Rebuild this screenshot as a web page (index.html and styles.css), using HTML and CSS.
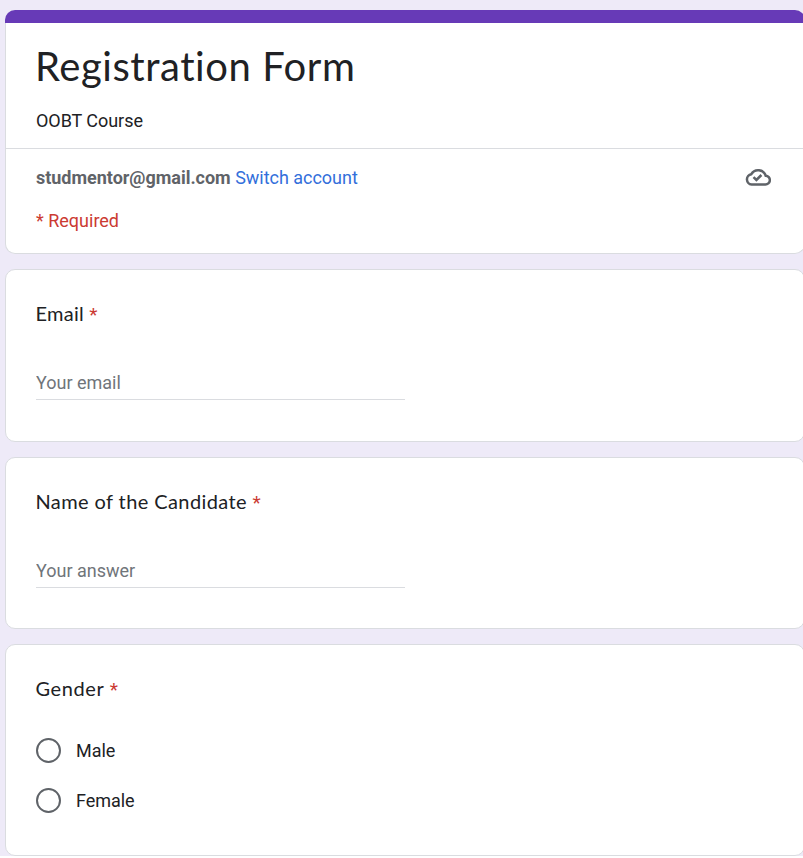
FILE: index.html
```html
<!DOCTYPE html>
<html lang="en">
<head>
    <meta charset="UTF-8">
    <meta name="viewport" content="width=device-width, initial-scale=1.0">
    <title>Registration Form</title>
    <link rel="stylesheet" href="styles.css">
</head>
<body>
    <form class="form">
        <div class="card header">
            <div class="intro">
                <h1>Registration Form</h1>
                <p class="description">OOBT Course</p>
            </div>
            <div class="account">
                <div class="account-text"><b>studmentor@gmail.com</b> <a href="#">Switch account</a></div>
                <svg class="cloud" viewBox="0 0 26 18" fill="none" stroke="#5f6368" stroke-width="2.5">
                    <path d="M6.6 16.5h13.6a4.4 4.4 0 0 0 .5-8.8A7.9 7.9 0 0 0 6.3 6.2a5.2 5.2 0 0 0 .3 10.3z"/>
                    <path d="M8.5 9.2l2.9 2.8 5-5"/>
                </svg>
            </div>
            <div class="required">* Required</div>
        </div>

        <div class="card question">
            <label class="label label-email" for="email">Email <span class="star">*</span></label>
            <input type="text" id="email" name="email" placeholder="Your email">
        </div>

        <div class="card question">
            <label class="label label-name" for="name">Name of the Candidate <span class="star">*</span></label>
            <input type="text" id="name" name="name" placeholder="Your answer">
        </div>

        <div class="card question gender">
            <div class="label label-gender">Gender <span class="star">*</span></div>
            <label class="option"><input type="radio" name="gender" value="male">Male</label>
            <label class="option"><input type="radio" name="gender" value="female">Female</label>
        </div>
    </form>
</body>
</html>
```
FILE: styles.css
```css
* {
    box-sizing: border-box;
}

body {
    font-family: Roboto, Arial, sans-serif;
    font-size: 18px;
    color: #202124;
    background-color: #fff;
    margin: 0;
    overflow: hidden;
}

.form {
    display: flex;
    flex-direction: column;
    gap: 15px;
    height: 856px;
    padding: 10px 0 0 5px;
    background-color: #eeeaf8;
}

.card {
    flex: none;
    width: 800px;
    background-color: #fff;
    border: 1px solid #dadce0;
    border-radius: 10px;
}

.header {
    height: 244px;
    border-top: none;
}

/* colour bar over the top edge of the card */
.header::before {
    content: "";
    display: block;
    height: 13px;
    margin: 0 -1px;
    background-color: #673ab7;
    border-radius: 10px 10px 0 0;
}

.intro {
    height: 126px;
    padding: 18px 30px 0;
    border-bottom: 1px solid #dadce0;
}

h1 {
    font-family: Lato, sans-serif;
    font-size: 40px;
    font-weight: 400;
    line-height: 50px;
    letter-spacing: 0.55px;
    text-indent: -1px;
    margin: 0;
}

.description {
    margin: 18px 0 0;
    line-height: 24px;
    letter-spacing: -0.05px;
}

.account {
    display: flex;
    align-items: center;
    justify-content: space-between;
    height: 24px;
    margin: 16px 33px 0 30px;
    color: #5f6368;
    letter-spacing: -0.02px;
}

.account a {
    color: #336fdb;
    text-decoration: none;
}

.cloud {
    width: 26px;
    height: 18px;
}

.required {
    margin: 20px 30px 0;
    line-height: 24px;
    color: #cb3a32;
}

.question {
    height: 173px;
    padding: 28px 30px;
}

.question + .question {
    height: 172px;
}

.label {
    display: block;
    font-family: Lato, sans-serif;
    font-size: 20px;
    line-height: 30px;
    letter-spacing: 0.4px;
    text-indent: -0.5px;
}

.label-email {
    letter-spacing: 0.25px;
}

.label-gender {
    letter-spacing: 0.6px;
}

.star {
    font-family: Roboto, Arial, sans-serif;
    font-size: 19px;
    color: #cb3a32;
}

input[type="text"] {
    display: block;
    width: 369px;
    height: 34px;
    margin-top: 36px;
    padding: 0;
    border: none;
    border-bottom: 1px solid #dadce0;
    font: inherit;
    outline: none;
}

input::placeholder {
    color: #70757a;
    opacity: 1;
}

.question.gender {
    height: 212px;
}

.option {
    display: flex;
    align-items: center;
    gap: 15px;
    height: 25px;
    margin-top: 25px;
    letter-spacing: -0.05px;
}

.label-gender + .option {
    margin-top: 33px;
}

input[type="radio"] {
    appearance: none;
    width: 25px;
    height: 25px;
    margin: 0;
    border: 2px solid #5f6368;
    border-radius: 50%;
}

input[type="radio"]:checked {
    border: 7px solid #673ab7;
}
```
